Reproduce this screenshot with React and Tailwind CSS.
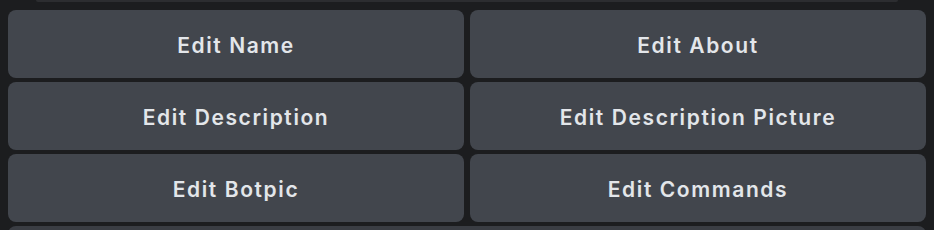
import React from "react";

const rows = [
  ["Edit Name", "Edit About"],
  ["Edit Description", "Edit Description Picture"],
  ["Edit Botpic", "Edit Commands"],
];

export default function App() {
  return (
    <div
      className="w-[934px] h-[230px] overflow-hidden bg-[#1c1d1f] flex flex-col"
      style={{ fontFamily: "Inter, 'Noto Sans', sans-serif" }}
    >
      <div className="mx-[36px] h-[2px] shrink-0 rounded-b-[8px] bg-[#2c2d30]" />
      <div className="grid grid-cols-2 gap-x-[6px] gap-y-[4px] px-[8px] pt-[8px]">
        {rows.flat().map((t) => (
          <div
            key={t}
            className="h-[68px] rounded-[8px] bg-[#42464d] flex items-center justify-center pt-[3px] text-[21px] font-semibold text-[#e3e6ea] tracking-[1.6px]"
          >
            {t}
          </div>
        ))}
      </div>
      <div className="mx-[8px] mt-[4px] h-[8px] shrink-0 rounded-t-[8px] bg-[#3a3d43]" />
    </div>
  );
}
